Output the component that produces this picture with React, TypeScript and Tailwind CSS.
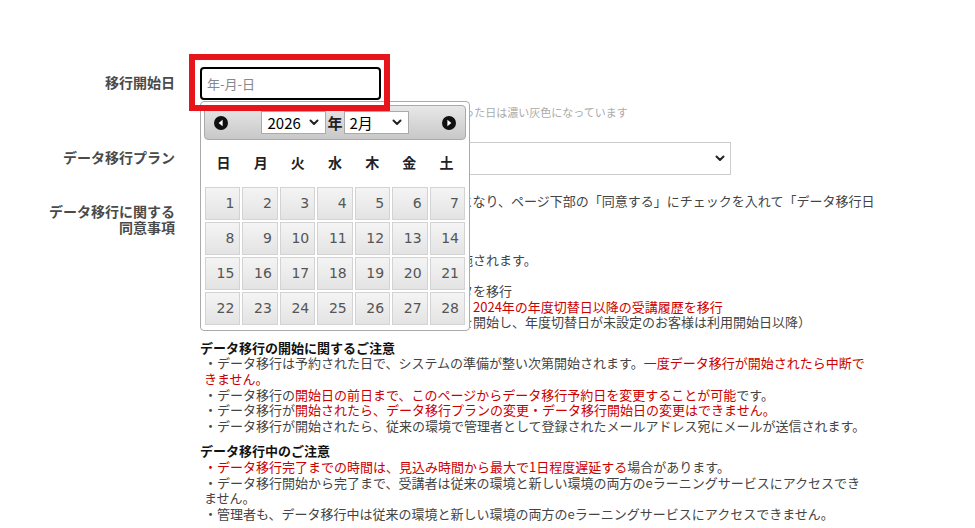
import React from "react";

const RED = "text-[#cc0000]";

function Chevron() {
    return (
        <svg width="10" height="7" viewBox="0 0 10 7" className="shrink-0">
            <path d="M1.5 1.5l3.5 3.5 3.5-3.5" fill="none" stroke="#222" strokeWidth="2" strokeLinecap="round" strokeLinejoin="round" />
        </svg>
    );
}

function NavIcon({ dir }: { dir: "prev" | "next" }) {
    return (
        <svg width="14" height="14" viewBox="0 0 14 14">
            <circle cx="7" cy="7" r="7" fill="#111" />
            {dir === "prev" ? (
                <path d="M8.6 3.8v6.4L4.6 7z" fill="#fff" />
            ) : (
                <path d="M5.4 3.8v6.4L9.4 7z" fill="#fff" />
            )}
        </svg>
    );
}

function MiniSelect({ value }: { value: string }) {
    return (
        <div className="flex h-[23px] w-[65px] items-center justify-between border border-[#aaa] bg-white pl-[5px] pr-[6px] text-[15px] leading-none text-black">
            <span>{value}</span>
            <Chevron />
        </div>
    );
}

const weekDays = ["日", "月", "火", "水", "木", "金", "土"];
const days = Array.from({ length: 28 }, (_, i) => i + 1);

function Calendar() {
    return (
        <div className="absolute left-0 top-[34px] z-10 w-[270px] rounded-[4px] border border-[#aaa] bg-white px-[3px] pb-[5px] pt-[3px]">
            <div className="flex h-[35px] items-center justify-between rounded-[4px] border border-[#aaa] bg-gradient-to-b from-[#e8e8e8] to-[#c8c8c8] pl-[9px] pr-[9px]">
                <NavIcon dir="prev" />
                <div className="flex items-center">
                    <MiniSelect value="2026" />
                    <span className="mx-[1px] text-[15px] font-bold text-[#222]">年</span>
                    <MiniSelect value="2月" />
                </div>
                <NavIcon dir="next" />
            </div>

            <div className="grid h-[46px] grid-cols-7 items-center px-[1px] text-center text-[14px] font-bold text-[#222]">
                {weekDays.map((d) => (
                    <span key={d}>{d}</span>
                ))}
            </div>

            <div className="mt-[1px] grid grid-cols-7 gap-[2px] px-[1px]">
                {days.map((d) => (
                    <div
                        key={d}
                        className="h-[33px] border border-[#d3d3d3] bg-gradient-to-b from-[#f4f4f4] via-[#ececec] to-[#e3e3e3] pr-[5px] text-right font-['DejaVu_Sans',sans-serif] text-[14px] leading-[31px] text-[#555]"
                    >
                        {d}
                    </div>
                ))}
            </div>
        </div>
    );
}

function Line({ children, className = "" }: { children: React.ReactNode; className?: string }) {
    return <div className={`whitespace-nowrap ${className}`}>{children}</div>;
}

export default function App() {
    return (
        <div className="min-h-screen bg-white pt-[67px] font-['Noto_Sans_CJK_JP','Noto_Sans',sans-serif] text-[13px] leading-[15.6px] text-[#444]">
            {/* 移行開始日 */}
            <div className="flex">
                <div className="w-[175px] shrink-0 pt-[7px] text-right text-[14px] font-bold leading-[16px] text-[#4a4a4a]">移行開始日</div>
                <div className="ml-[25px] flex flex-col">
                    <div className="relative w-[181px]">
                        <div className="pointer-events-none absolute left-[-11px] top-[-13px] z-20 h-[57px] w-[201px] border-[6px] border-[#e8141c]" />
                        <div className="flex h-[33px] items-center rounded-[4px] border-2 border-black bg-white pl-[5px] text-[13px] text-[#888]">年-月-日</div>
                        <Calendar />
                    </div>
                    <div className="mt-[5px] whitespace-nowrap text-[11px] leading-[14px] text-[#aaa]">
                        ※データ移行を予約できない日や、予約枠が既に埋まった日は濃い灰色になっています
                    </div>
                </div>
            </div>

            {/* データ移行プラン */}
            <div className="mt-[23px] flex">
                <div className="w-[175px] shrink-0 pt-[7px] text-right text-[14px] font-bold leading-[16px] text-[#4a4a4a]">データ移行プラン</div>
                <div className="ml-[25px] flex h-[33px] w-[531px] items-center justify-end border border-[#ccc] bg-white pr-[5px]">
                    <Chevron />
                </div>
            </div>

            {/* 同意事項 */}
            <div className="mt-[18px] flex">
                <div className="w-[175px] shrink-0 pt-[10px] text-right text-[14px] font-bold leading-[16px] text-[#4a4a4a]">
                    データ移行に関する
                    <br />
                    同意事項
                </div>
                <div className="ml-[25px]">
                    <div>
                        <Line>データ移行には、以下の事項への同意が必要となり、ページ下部の「同意する」にチェックを入れて「データ移行日</Line>
                        <Line>の予約」ボタンを押してください。</Line>
                    </div>

                    <div className="mt-[12px]">
                        <Line>【データ移行について】</Line>
                        <Line>データ移行は予約した移行開始日の夜間に実施されます。</Line>
                        <Line>【移行プラン】</Line>
                        <Line>・全期間プラン：これまでの全受講履歴データを移行</Line>
                        <Line className={RED}>・年度プラン：直近年度のみを移行する。例：2024年の年度切替日以降の受講履歴を移行</Line>
                        <Line>（全受講者が各年度切替日以降に新たに受講を開始し、年度切替日が未設定のお客様は利用開始日以降）</Line>
                    </div>

                    <div className="mt-[10px]">
                        <Line className="font-bold text-[#111]">データ移行の開始に関するご注意</Line>
                        <div className="pl-[4px]">
                            <Line>
                                ・データ移行は予約された日で、システムの準備が整い次第開始されます。<span className={RED}>一度データ移行が開始されたら中断で</span>
                            </Line>
                            <Line className={RED}>きません。</Line>
                            <Line>
                                ・データ移行の<span className={RED}>開始日の前日まで、このページからデータ移行予約日を変更することが可能</span>です。
                            </Line>
                            <Line>
                                ・データ移行が<span className={RED}>開始されたら、データ移行プランの変更・データ移行開始日の変更はできません。</span>
                            </Line>
                            <Line>・データ移行が開始されたら、従来の環境で管理者として登録されたメールアドレス宛にメールが送信されます。</Line>
                        </div>
                    </div>

                    <div className="mt-[10px]">
                        <Line className="font-bold text-[#111]">データ移行中のご注意</Line>
                        <div className="pl-[4px]">
                            <Line>
                                <span className={RED}>・データ移行完了までの時間は、見込み時間から最大で1日程度遅延する</span>場合があります。
                            </Line>
                            <Line>・データ移行開始から完了まで、受講者は従来の環境と新しい環境の両方のeラーニングサービスにアクセスでき</Line>
                            <Line>ません。</Line>
                            <Line>・管理者も、データ移行中は従来の環境と新しい環境の両方のeラーニングサービスにアクセスできません。</Line>
                        </div>
                    </div>
                </div>
            </div>
        </div>
    );
}
